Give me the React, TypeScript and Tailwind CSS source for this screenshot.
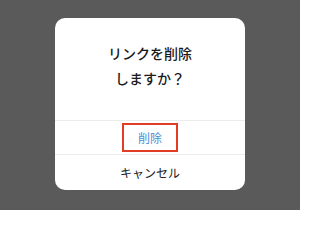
import React from "react";

export default function App() {
  return (
    <div
      className="flex h-[210px] w-[300px] items-start justify-center bg-[#5a5a5a] pt-[18px]"
      style={{ fontFamily: '"Noto Sans CJK JP", "Noto Sans", sans-serif' }}
    >
      <div className="w-[190px] overflow-hidden rounded-[10px] bg-white">
        <div className="flex flex-col items-center pt-[23px] pb-[29px] text-[14px] font-medium leading-[25px] text-[#1a1a1a]">
          <span>リンクを削除</span>
          <span>しますか？</span>
        </div>
        <div className="h-px bg-[#ececec]" />
        <div className="flex h-[33px] items-center justify-center">
          <span className="flex h-[29px] w-[56px] items-center justify-center border-2 border-[#e23b26] text-[12px] text-[#4a8fd6]">
            削除
          </span>
        </div>
        <div className="h-px bg-[#ececec]" />
        <div className="flex h-[35px] items-center justify-center text-[12px] text-[#222]">
          キャンセル
        </div>
      </div>
    </div>
  );
}
